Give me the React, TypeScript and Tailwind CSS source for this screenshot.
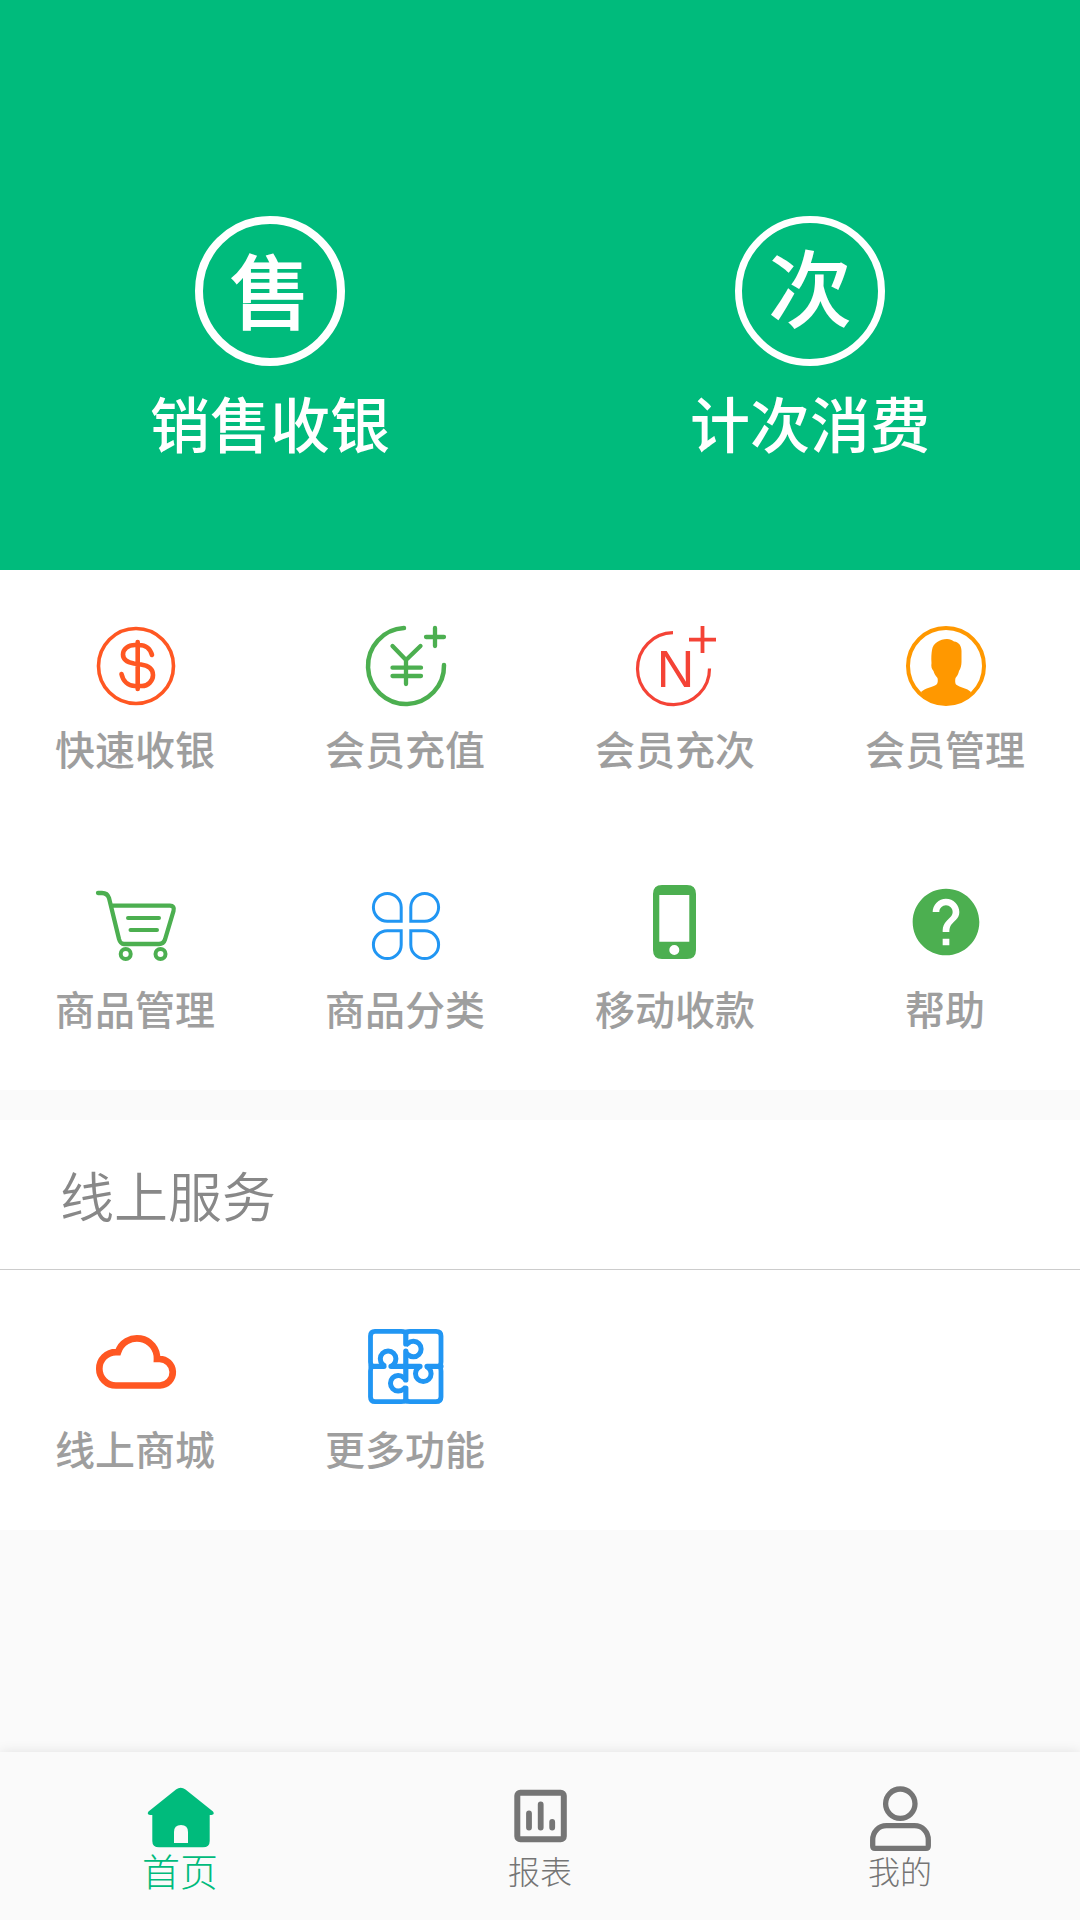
import type { ReactNode } from "react";

function Icon({ className, children }: { className: string; children: ReactNode }) {
  return (
    <svg viewBox="-1 0 80 80" fill="none" stroke="currentColor" aria-hidden="true" className={`size-20 overflow-visible ${className}`}>
      {children}
    </svg>
  );
}

function TabIcon({ children }: { children: ReactNode }) {
  return (
    <svg viewBox="0 0 66 66" fill="none" stroke="currentColor" aria-hidden="true" className="size-[66px] overflow-visible">
      {children}
    </svg>
  );
}

const dollar = (
  <Icon className="text-[#ff5722]">
    <circle cx="40" cy="40" r="37.500" strokeWidth="3.600" />
    <path d="M56 29C54 22 49 19 43 19H39C32 19 27 23 27 28.500S32 36.500 38 37.500L45 38.500C52 39.500 57 43 57 49S52 60 46 60H39C32 60 27 55 25.500 48M41.700 16V63" strokeWidth="4.600" strokeLinecap="round" />
  </Icon>
);

const recharge = (
  <Icon className="text-[#4caf50]">
    <path d="M38 2A38 38 0 1 0 78 39" strokeWidth="4.500" strokeLinecap="round" />
    <path d="M60 11H78M69 2V20M26.500 20L40 34L54.500 20M40 34V58M26.500 41.700H55M26.500 50H55" strokeWidth="4.300" strokeLinecap="round" />
  </Icon>
);

const countCard = (
  <Icon className="text-[#f44336]">
    <path d="M37 6.700A36 36 0 1 0 73.500 42.500" strokeWidth="3.200" />
    <path d="M53 13.700H80M66.500 0V27" strokeWidth="3.800" />
    <text x="39.500" y="61" textAnchor="middle" fill="currentColor" stroke="none" className="font-['Liberation_Sans',sans-serif] text-[52px]">N</text>
  </Icon>
);

const member = (
  <Icon className="text-[#ff9800]">
    <circle cx="40" cy="40" r="38" strokeWidth="4" />
    <path
      d="M15 66C19 62 27 61 30.500 58.500C32 57 32 54 31.500 52C29 49 28 47 27.500 45C25.500 43 25 40 25.500 37C25 32 25.500 27 26 24C27 17 34 13 41 13C44 13 46 14 48 15.500C53 16 55.500 20 55.500 25V36C55.500 39 54.500 43 53 45C52.500 48 51 50 49.500 52C49 54 49 57 50 58.500C54 61.500 61 62 65 66C59 75 49 79 40 79S21 75 15 66Z"
      fill="currentColor"
      stroke="none"
    />
  </Icon>
);

const cart = (
  <Icon className="text-[#4caf50]">
    <path d="M2 7H6C10 7 12 9 13 12L23 53C24 56.500 25 58 28 58H63C66 58 68 56.500 69 53.500L77.500 25C78.500 21.500 77 19.700 74 19.700H17" strokeWidth="4.300" strokeLinecap="round" strokeLinejoin="round" />
    <path d="M32 32H63M34.500 44H61" strokeWidth="4" strokeLinecap="round" />
    <circle cx="29.700" cy="68" r="5" strokeWidth="4" />
    <circle cx="64.500" cy="68" r="5" strokeWidth="4" />
  </Icon>
);

const clover = (
  <Icon className="text-[#2196f3]">
    <path
      d="M35.200 35.200V21.300A13.900 13.900 0 1 0 21.300 35.200ZM44.800 35.200V21.300A13.900 13.900 0 1 1 58.700 35.200ZM35.200 44.800V58.700A13.900 13.900 0 1 1 21.300 44.800ZM44.800 44.800V58.700A13.900 13.900 0 1 0 58.700 44.800Z"
      strokeWidth="3"
    />
  </Icon>
);

const phone = (
  <Icon className="text-[#4caf50]">
    <path
      d="M26 -1H51Q60 -1 60 8V64Q60 73 51 73H26Q17 73 17 64V8Q17 -1 26 -1ZM23.300 9V55.700H53.300V9ZM38.300 59A5 5 0 1 0 38.300 69A5 5 0 1 0 38.300 59Z"
      fill="currentColor"
      fillRule="evenodd"
      stroke="none"
    />
  </Icon>
);

const help = (
  <Icon className="text-[#4caf50]">
    <path
      transform="translate(0 -4) scale(3.333)"
      d="M12 2C6.480 2 2 6.480 2 12s4.480 10 10 10 10-4.480 10-10S17.520 2 12 2zm1 17h-2v-2h2v2zm2.070-7.750l-.9.920C13.450 12.900 13 13.500 13 15h-2v-.5c0-1.100.450-2.100 1.170-2.830l1.240-1.260c.370-.360.590-.860.590-1.410 0-1.100-.9-2-2-2s-2 .9-2 2H8c0-2.210 1.790-4 4-4s4 1.790 4 4c0 .880-.360 1.680-.930 2.250z"
      fill="currentColor"
      stroke="none"
    />
  </Icon>
);

const cloud = (
  <Icon className="text-[#ff5722]">
    <path d="M20 59.500A16.700 16.700 0 0 1 20 26.100H22A20 20 0 0 1 61 33H63A13.200 13.200 0 0 1 64 59.500Z" strokeWidth="6.700" />
  </Icon>
);

const puzzle = (
  <Icon className="text-[#2196f3]">
    <path
      d="M9 5.300H35Q39.500 5.300 39.800 8Q40 5.300 44 5.300H70Q75 5.300 75 10V36Q75 40 72 40.300Q75 40.500 75 45V71Q75 75.700 70 75.700H44Q40 75.700 39.800 73Q39.500 75.700 35 75.700H9Q4.500 75.700 4.500 71V45Q4.500 40.500 7.500 40.300Q4.500 40 4.500 36V10Q4.500 5.300 9 5.300Z"
      strokeWidth="4.800"
    />
    <path
      d="M39.800 6V18M39.800 25V54M39.800 75V62M5 40.300H18M25 40.300H54M61 40.300H75"
      strokeWidth="5.200"
      strokeLinecap="round"
    />
    <path
      d="M39.800 19L42 17.300A7.800 7.800 0 1 1 42 28.700L39.800 26.500M39.800 61L37.600 63A7.800 7.800 0 1 1 37.600 51.600L39.800 54M19 40.300L16.500 38.300A7.800 7.800 0 1 1 27.700 38.300L25.500 40.300M54 40.300L51.700 42.300A7.800 7.800 0 1 0 62.900 42.300L60.500 40.300"
      strokeWidth="5"
    />
  </Icon>
);

const homeTab = (
  <TabIcon>
    <path
      d="M29 3.500Q33.700 0 38.500 3.500L66 25.500Q68 28.500 64.500 29H62.700V55Q62.700 61.300 56 61.300H12Q5.300 61.300 5.300 55V29H3Q-0.500 28.500 1.500 25.500ZM27 57H41V46Q41 39 34 39T27 46Z"
      fill="currentColor"
      fillRule="evenodd"
      stroke="none"
    />
  </TabIcon>
);

const reportTab = (
  <TabIcon>
    <rect x="10.300" y="6.700" width="46.500" height="46.500" rx="3" strokeWidth="6" />
    <path d="M22 27.500V41.500M33.700 18.500V41.500M45.200 36V41.500" strokeWidth="5.800" strokeLinecap="round" />
  </TabIcon>
);

const mineTab = (
  <TabIcon>
    <circle cx="33.300" cy="17.700" r="14.700" strokeWidth="5.300" />
    <path d="M5.700 60V54C5.700 46 11.500 39.700 19.500 39.700H47.500C55.500 39.700 61.300 46 61.300 54V60Q61.300 62.300 59 62.300H8Q5.700 62.300 5.700 60Z" strokeWidth="5.300" />
  </TabIcon>
);

const services = [
  { label: "快速收银", icon: dollar },
  { label: "会员充值", icon: recharge },
  { label: "会员充次", icon: countCard },
  { label: "会员管理", icon: member },
  { label: "商品管理", icon: cart },
  { label: "商品分类", icon: clover },
  { label: "移动收款", icon: phone },
  { label: "帮助", icon: help },
];

const onlineServices = [
  { label: "线上商城", icon: cloud },
  { label: "更多功能", icon: puzzle },
];

const tabs = [
  { label: "首页", icon: homeTab, active: true },
  { label: "报表", icon: reportTab, active: false },
  { label: "我的", icon: mineTab, active: false },
];

function MainAction({ mark, markStyle, label }: { mark: string; markStyle: string; label: string }) {
  return (
    <button className="flex flex-1 flex-col items-center">
      <span className={`flex size-[150px] items-center justify-center rounded-full border-white leading-none ${markStyle}`}>{mark}</span>
      <span className="mt-[22px] text-[60px] leading-[68px] font-medium">{label}</span>
    </button>
  );
}

function ServiceGrid({ items }: { items: { label: string; icon: ReactNode }[] }) {
  return (
    <div className="grid grid-cols-4 bg-white">
      {items.map((item) => (
        <button key={item.label} className="flex h-[260px] flex-col items-center pt-14">
          {item.icon}
          <span className="mt-[18px] text-[40px] leading-12 font-medium text-[#9e9e9e]">{item.label}</span>
        </button>
      ))}
    </div>
  );
}

export default function App() {
  return (
    <div className="flex min-h-screen flex-col bg-[#fafafa] font-['Noto_Sans_CJK_SC',sans-serif]">
      <header className="flex bg-[#00bb7c] pt-54 pb-[114px] text-white">
        <MainAction mark="售" markStyle="border-8 pb-2 text-[80px] font-normal [-webkit-text-stroke:2px_white]" label="销售收银" />
        <MainAction mark="次" markStyle="border-7 pb-3 text-[84px] font-medium" label="计次消费" />
      </header>

      <main className="flex-1">
        <ServiceGrid items={services} />
        <section className="mt-[30px]">
          <h2 className="border-b border-[#cccccc] bg-white px-15 py-10 text-[54px] leading-[69px] font-[350] text-[#888888]">线上服务</h2>
          <ServiceGrid items={onlineServices} />
        </section>
      </main>

      <nav className="flex h-42 bg-[#fafafa] pt-[34px] shadow-[0_0_12px_rgba(0,0,0,0.1)]">
        {tabs.map((tab) => (
          <button key={tab.label} className={`flex flex-1 flex-col items-center ${tab.active ? "text-[#00bb7c]" : "text-[#757575]"}`}>
            {tab.icon}
            <span className={`leading-9 font-light ${tab.active ? "text-[38px]" : "text-[32px]"}`}>{tab.label}</span>
          </button>
        ))}
      </nav>
    </div>
  );
}
